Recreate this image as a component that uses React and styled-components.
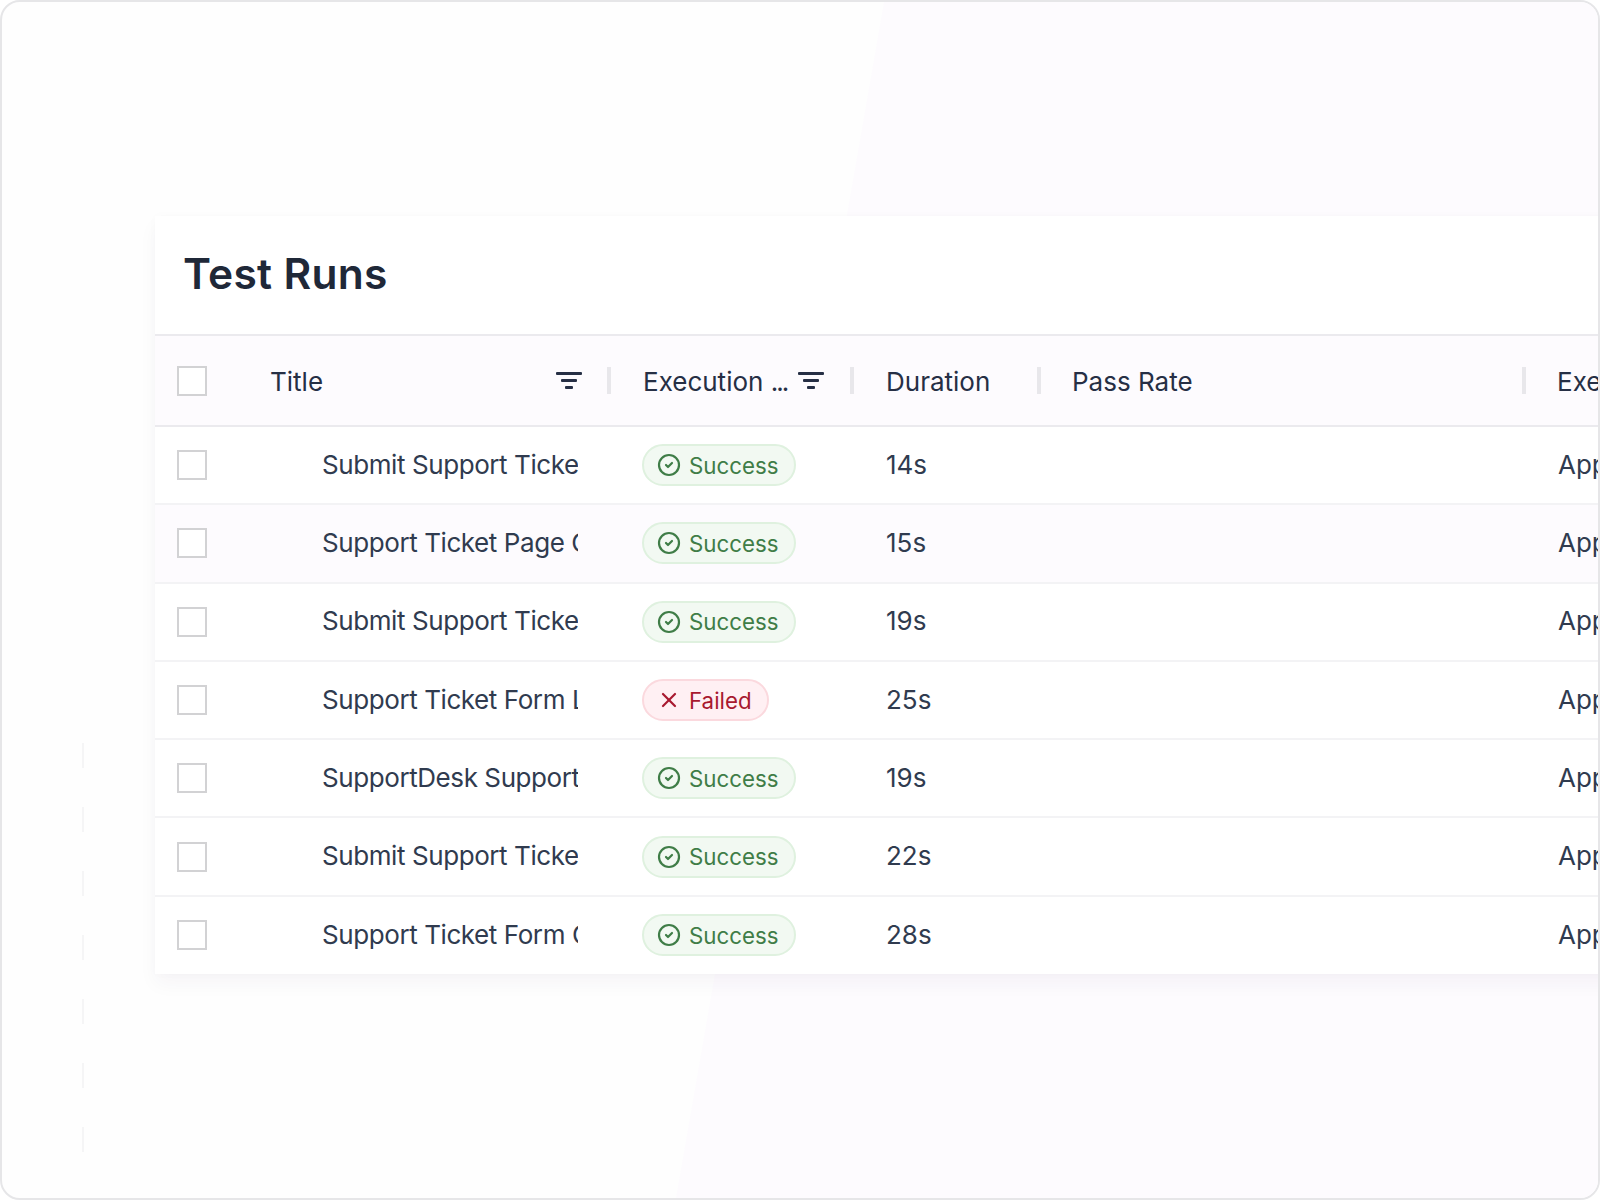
import styled, { createGlobalStyle } from "styled-components";
import { CircleCheck, X } from "lucide-react";

const GlobalStyle = createGlobalStyle`
    html, body {
        margin: 0;
        background: #fff;
        overflow: hidden;
    }
    * {
        box-sizing: border-box;
    }
`;

const Frame = styled.div`
    position: relative;
    width: 1600px;
    height: 1200px;
    padding: 214px 0 0 153px;
    overflow: hidden;
    background: #fefefe;
    border: 2px solid #e6e6e8;
    border-radius: 20px;
    font-family: Inter, "Liberation Sans", sans-serif;
    /* pale slanted band behind the card */
    &::before {
        content: "";
        position: absolute;
        inset: 0;
        background: #fdfbfe;
        clip-path: polygon(882px 0, 100% 0, 100% 100%, 674px 100%);
    }
    /* dashed guide on the left */
    &::after {
        content: "";
        position: absolute;
        left: 80px;
        top: 741px;
        width: 2px;
        height: 409px;
        background: repeating-linear-gradient(to bottom, #f5f5f6 0 25px, transparent 25px 64px);
    }
`;
const Card = styled.section`
    position: relative;
    z-index: 1;
    width: 1600px;
    background: #fff;
    box-shadow: 0 10px 18px rgba(50, 35, 80, 0.04), 0 0 10px rgba(50, 35, 80, 0.02);
`;
const CardHeader = styled.header`
    height: 118px;
    display: flex;
    align-items: center;
    padding: 0 0 3px 28px;
`;
const Heading = styled.h1`
    margin: 0;
    font-size: 42.5px;
    font-weight: 600;
    letter-spacing: 0.3px;
    color: #1f2838;
`;
const HeadRow = styled.div`
    display: grid;
    grid-template-columns: 84px 372px 243px 187px 485px 1fr;
    height: 93px;
    align-items: center;
    background: #fdfbfe;
    border-top: 2px solid #ebeaee;
    border-bottom: 2px solid #ebeaee;
`;
const Row = styled.div`
    display: grid;
    grid-template-columns: 84px 372px 243px 187px 485px 1fr;
    height: ${props => props.$last ? "77px" : "78.3px"};
    align-items: center;
    background: ${props => props.$shaded ? "#fdfbfe" : "#fff"};
    border-bottom: ${props => props.$last ? "0" : "2px solid #f3f3f5"};
`;
const CheckCell = styled.div`
    padding-left: 22px;
    display: flex;
`;
const Checkbox = styled.span`
    width: 30px;
    height: 30px;
    background: #fff;
    border: 2px solid #d2d2d4;
`;
const HeadCell = styled.div`
    display: flex;
    align-items: center;
    padding-left: ${props => props.$pad || 31}px;
    font-size: 26px;
    color: #262f45;
    min-width: 0;
`;
const HeadLabel = styled.span`
    flex: 1;
    padding-top: 1px;
    white-space: nowrap;
`;
const Dots = styled.span`
    letter-spacing: -2px;
`;
const Divider = styled.span`
    width: 4px;
    height: 27px;
    background: #e8e7eb;
    margin-left: ${props => props.$gap || 0}px;
`;
const FilterIcon = styled.svg`
    width: 26px;
    height: 18px;
    flex: none;
    color: #262f45;
`;
const TitleText = styled.div`
    margin-left: 32px;
    margin-right: 33px;
    padding: 0 0 2px 51px;
    overflow: hidden;
    white-space: nowrap;
    font-size: 26px;
    letter-spacing: -0.42px;
    color: #303b4f;
`;
const TextCell = styled.div`
    padding: 0 0 2px 32px;
    overflow: hidden;
    white-space: nowrap;
    font-size: 26px;
    color: #303b4f;
`;
const BadgeCell = styled.div`
    padding-left: 31px;
    display: flex;
`;
const Badge = styled.span`
    display: inline-flex;
    align-items: center;
    gap: 8px;
    height: 42px;
    padding: 0 15px 0 13px;
    border-radius: 21px;
    font-size: 22.3px;
    color: ${props => props.$failed ? "#a8192f" : "#3f7d47"};
    background: ${props => props.$failed ? "#fff0f3" : "#f2f9f2"};
    border: 2px solid ${props => props.$failed ? "#fbd9de" : "#dff1df"};
`;

const runs = [
    { title: "Submit Support Ticket", status: "Success", duration: "14s" },
    { title: "Support Ticket Page Check", status: "Success", duration: "15s", shaded: true },
    { title: "Submit Support Ticket", status: "Success", duration: "19s" },
    { title: "Support Ticket Form Load", status: "Failed", duration: "25s" },
    { title: "SupportDesk Support Ticket", status: "Success", duration: "19s" },
    { title: "Submit Support Ticket", status: "Success", duration: "22s" },
    { title: "Support Ticket Form Check", status: "Success", duration: "28s" },
];

const Filter = () => (
    <FilterIcon viewBox="0 0 26 18" fill="currentColor">
        <rect x="0" y="0" width="26" height="3" rx="1" />
        <rect x="5" y="7" width="16" height="3" rx="1" />
        <rect x="9" y="14" width="8" height="3" rx="1" />
    </FilterIcon>
);

const App = () => {
    return (
    <Frame>
        <GlobalStyle />
        <Card>
            <CardHeader><Heading>Test Runs</Heading></CardHeader>
            <HeadRow>
                <CheckCell><Checkbox /></CheckCell>
                <HeadCell><HeadLabel>Title</HeadLabel><Filter /><Divider $gap={25} /></HeadCell>
                <HeadCell $pad={32}><HeadLabel>Execution <Dots>...</Dots></HeadLabel><Filter /><Divider $gap={26} /></HeadCell>
                <HeadCell $pad={32}><HeadLabel>Duration</HeadLabel><Divider /></HeadCell>
                <HeadCell><HeadLabel>Pass Rate</HeadLabel><Divider /></HeadCell>
                <HeadCell><HeadLabel>Executor</HeadLabel></HeadCell>
            </HeadRow>
            {runs.map((run, index) => (
                <Row key={index} $shaded={run.shaded} $last={index === runs.length - 1}>
                    <CheckCell><Checkbox /></CheckCell>
                    <TitleText>{run.title}</TitleText>
                    <BadgeCell>
                        {run.status === "Failed" ? (
                            <Badge $failed><X size={24} strokeWidth={2.2} />{run.status}</Badge>
                        ) : (
                            <Badge><CircleCheck size={24} strokeWidth={2.2} />{run.status}</Badge>
                        )}
                    </BadgeCell>
                    <TextCell>{run.duration}</TextCell>
                    <TextCell />
                    <TextCell>Application</TextCell>
                </Row>
            ))}
        </Card>
    </Frame>
    );
}

export default App;
